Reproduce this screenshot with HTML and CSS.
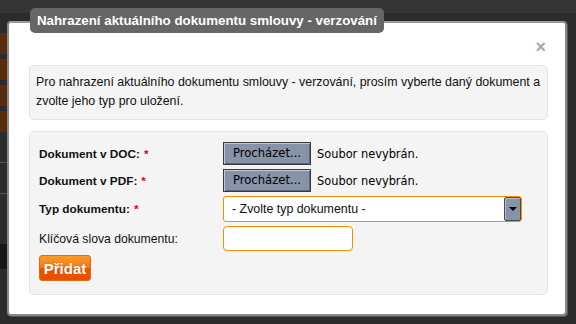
FILE: index.html
```html
<!DOCTYPE html>
<html lang="cs">
<head>
<meta charset="utf-8">
<title>Nahrazení dokumentu</title>
<link rel="stylesheet" href="styles.css">
</head>
<body>
<div class="backdrop">
  <div class="bd-top"></div>
  <div class="bd-col">
    <div class="bd-block"></div>
    <div class="bd-block"></div>
    <div class="bd-block"></div>
    <div class="bd-block"></div>
    <div class="bd-line"></div>
    <div class="bd-line"></div>
    <div class="bd-dark"></div>
  </div>
</div>
<div class="modal">
  <div class="dialog">
    <div class="close">×</div>
    <div class="info">Pro nahrazení aktuálního dokumentu smlouvy - verzování, prosím vyberte daný dokument a zvolte jeho typ pro uložení.</div>
    <form class="form">
      <div class="grid">
        <label class="lbl bold">Dokument v DOC:<span class="req">*</span></label>
        <div class="file"><span class="browse">Procházet...</span><span class="nofile">Soubor nevybrán.</span></div>
        <label class="lbl bold">Dokument v PDF:<span class="req">*</span></label>
        <div class="file"><span class="browse">Procházet...</span><span class="nofile">Soubor nevybrán.</span></div>
        <label class="lbl bold">Typ dokumentu:<span class="req">*</span></label>
        <div class="select"><span class="sel-text">- Zvolte typ dokumentu -</span><span class="sel-btn"><span class="tri"></span></span></div>
        <label class="lbl">Klíčová slova dokumentu:</label>
        <div><input class="text" type="text"></div>
      </div>
      <button type="button" class="submit">Přidat</button>
    </form>
  </div>
  <div class="title">Nahrazení aktuálního dokumentu smlouvy - verzování</div>
</div>
</body>
</html>
```
FILE: styles.css
```css
html, body {
  margin: 0;
  padding: 0;
}
body {
  width: 576px;
  height: 324px;
  background: #2c2c2c;
  font-family: "Liberation Sans", Arial, sans-serif;
  font-size: 12.4px;
  color: #111;
  overflow: hidden;
  position: relative;
}
.backdrop {
  position: absolute;
  left: 0;
  top: 0;
  width: 576px;
  height: 324px;
}
.bd-top {
  height: 13px;
  background: #353535;
}
.bd-col {
  width: 7px;
  padding-top: 20px;
  display: flex;
  flex-direction: column;
  gap: 5px;
}
.bd-block {
  height: 21px;
  background: #5a2c0c;
}
.bd-line {
  height: 1px;
  background: #555;
  margin-top: 25px;
}
.bd-dark {
  height: 25px;
  background: #161616;
  margin-top: 45px;
}
.modal {
  position: absolute;
  left: 7px;
  top: 8px;
  width: 560px;
}
.dialog {
  margin-top: 13px;
  height: 295px;
  box-sizing: border-box;
  background: #fff;
  border: 2px solid #8a8a8a;
  border-top-color: #9a9a9a;
  border-radius: 4px;
  box-shadow: 1px 1px 0 #555;
  padding: 42px 17px 0 20px;
  position: relative;
}
.title {
  position: absolute;
  left: 23px;
  top: 0;
  height: 25px;
  line-height: 25px;
  padding: 0 7px 0 7px;
  width: 340px;
  background: #666;
  color: #fff;
  font-weight: bold;
  font-size: 13.3px;
  border-radius: 5px;
  white-space: nowrap;
}
.close {
  position: absolute;
  right: 19px;
  top: 15px;
  color: #a8a8a8;
  font-size: 18px;
  font-weight: bold;
  line-height: 18px;
}
.info {
  height: 55px;
  box-sizing: border-box;
  background: #f4f4f4;
  border: 1px solid #e4e4e4;
  border-radius: 5px;
  padding: 7px 4px 0 6px;
  line-height: 19px;
  color: #111;
}
.form {
  margin: 11px 0 0 0;
  height: 164px;
  box-sizing: border-box;
  background: #f4f4f4;
  border: 1px solid #e4e4e4;
  border-radius: 5px;
  padding: 10px 9px 0 9px;
}
.grid {
  display: grid;
  grid-template-columns: 184px auto;
  grid-template-rows: 23px 23px 26px 25px;
  row-gap: 4px;
  align-items: center;
}
.lbl {
  font-size: 12.2px;
  color: #111;
}
.lbl.bold {
  font-weight: bold;
  font-size: 11.8px;
}
.req {
  color: #e2001a;
  margin-left: 4px;
}
.file {
  display: flex;
  align-items: center;
  gap: 6px;
  height: 23px;
}
.browse {
  box-sizing: border-box;
  width: 88px;
  height: 23px;
  line-height: 19px;
  text-align: center;
  background: #8793a8;
  border: 1px solid #3a3a3a;
  box-shadow: inset 1px 1px 0 #c0c8d6, inset -1px -1px 0 #5c6678;
  color: #000;
  font-family: "DejaVu Sans", sans-serif;
  font-size: 11.6px;
  padding-top: 1px;
}
.nofile {
  font-family: "DejaVu Sans", sans-serif;
  font-size: 11.4px;
  color: #000;
}
.select {
  box-sizing: border-box;
  width: 299px;
  height: 26px;
  background: #fff;
  border: 1px solid #f39200;
  border-radius: 3px;
  display: flex;
  align-items: stretch;
  justify-content: space-between;
}
.sel-text {
  padding-left: 8px;
  line-height: 24px;
  font-size: 12.4px;
  color: #111;
}
.sel-btn {
  width: 15px;
  background: #8793a8;
  border: 1px solid #4a4a4a;
  border-radius: 2px;
  box-shadow: inset 1px 1px 0 #b8c0cf;
  display: flex;
  align-items: center;
  justify-content: center;
}
.tri {
  width: 0;
  height: 0;
  border-left: 4px solid transparent;
  border-right: 4px solid transparent;
  border-top: 4px solid #000;
}
.text {
  box-sizing: border-box;
  width: 130px;
  height: 25px;
  border: 1px solid #f39200;
  border-radius: 4px;
  background: #fff;
  margin: 0;
  padding: 0;
  display: block;
}
.submit {
  margin-top: 4px;
  width: 52px;
  height: 26px;
  border: 1px solid #e06a10;
  border-radius: 3px;
  background: linear-gradient(to bottom, #fb9a2a 0%, #f27c14 48%, #ea5600 52%, #e84f00 100%);
  color: #fff;
  font-family: "Liberation Sans", Arial, sans-serif;
  font-weight: bold;
  font-size: 15px;
  text-shadow: 0 0 1px #c04000;
  padding: 0;
  display: block;
}
```
